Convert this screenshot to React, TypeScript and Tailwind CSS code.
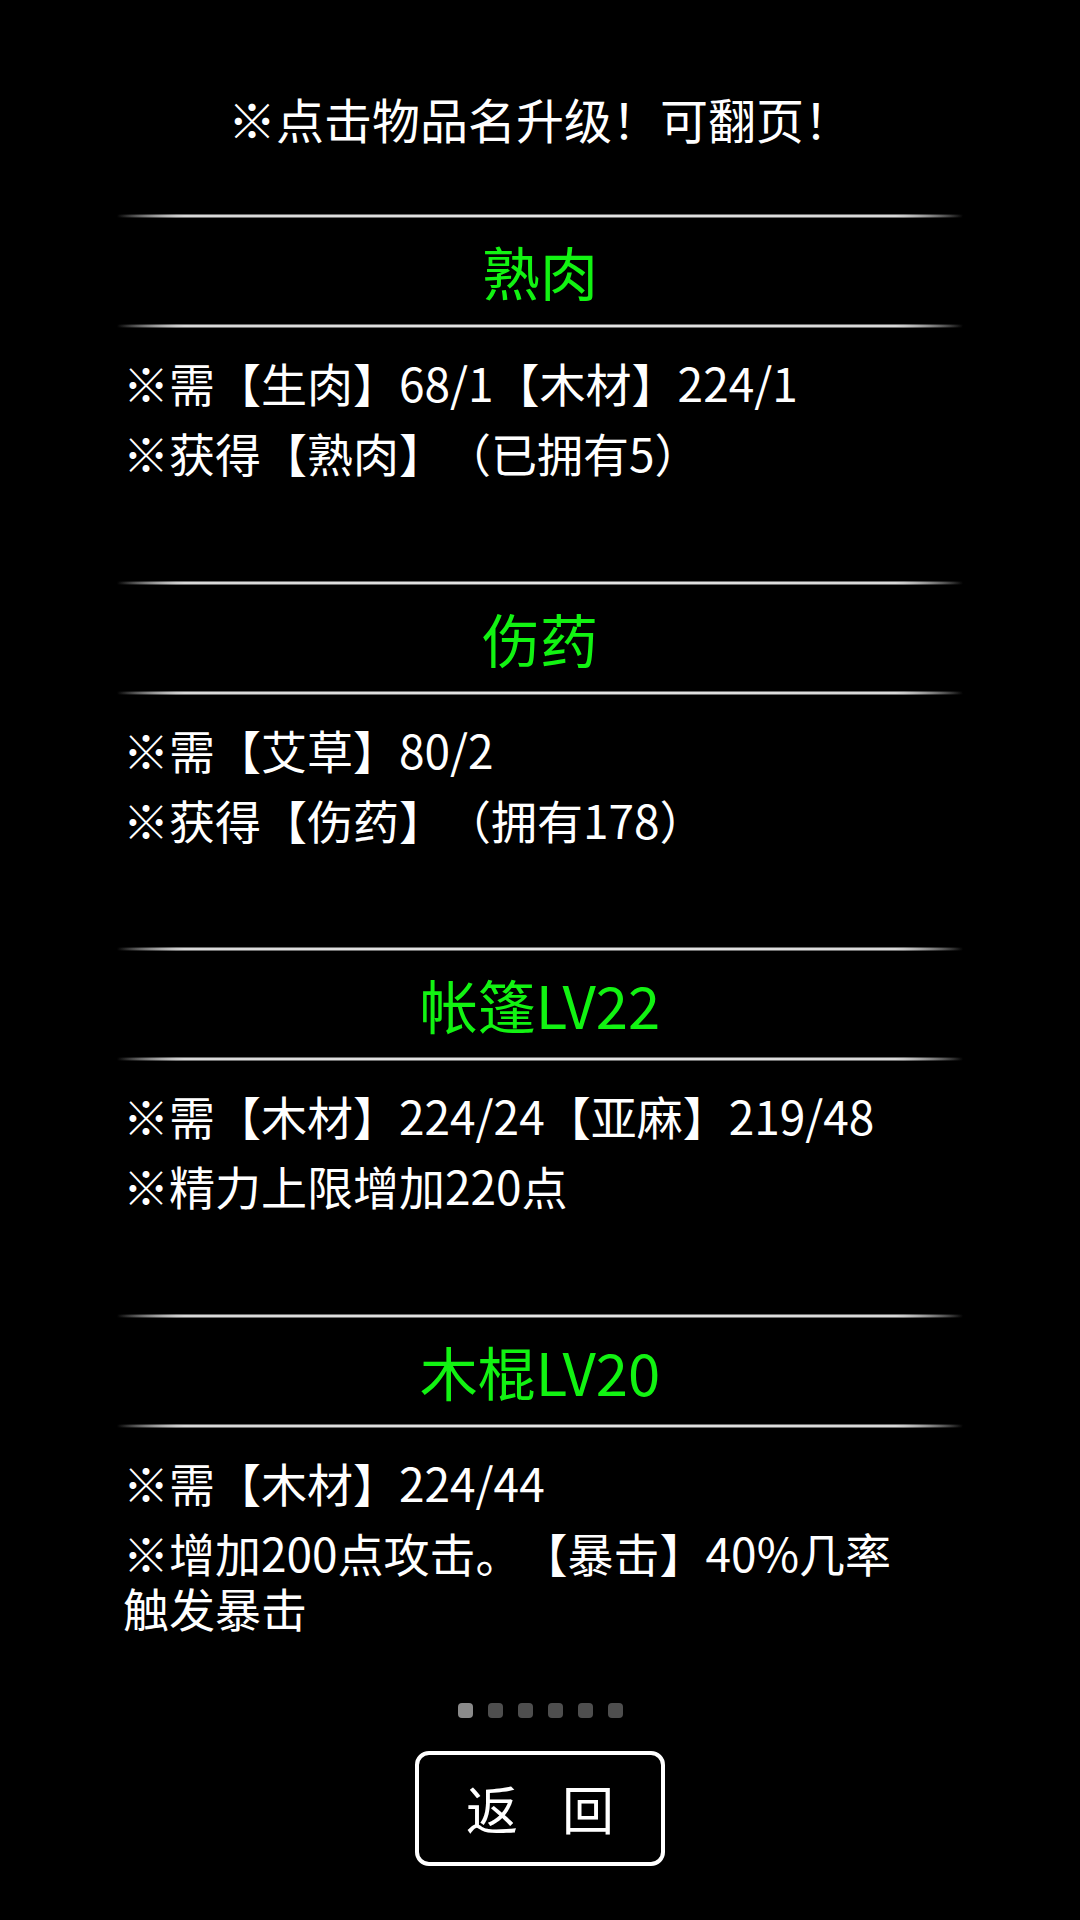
import React from "react";

type Item = {
  name: string;
  lines: string[];
};

const items: Item[] = [
  {
    name: "熟肉",
    lines: ["※需【生肉】68/1【木材】224/1", "※获得【熟肉】（已拥有5）"],
  },
  {
    name: "伤药",
    lines: ["※需【艾草】80/2", "※获得【伤药】（拥有178）"],
  },
  {
    name: "帐篷LV22",
    lines: ["※需【木材】224/24【亚麻】219/48", "※精力上限增加220点"],
  },
  {
    name: "木棍LV20",
    lines: ["※需【木材】224/44", "※增加200点攻击。【暴击】40%几率触发暴击"],
  },
];

function Divider() {
  return (
    <div className="flex h-[4px] w-full items-center bg-[linear-gradient(to_right,transparent,#6f6f6f_7%,#6f6f6f_93%,transparent)]">
      <div className="h-[2px] w-full bg-[linear-gradient(to_right,transparent,#d8d8d8_8%,#e6e6e6_50%,#d8d8d8_92%,transparent)]" />
    </div>
  );
}

export default function App() {
  const font = { fontFamily: '"Noto Sans CJK SC", "Noto Sans", sans-serif' };

  return (
    <main
      className="flex min-h-[1920px] w-[1080px] flex-col items-center bg-black text-white [text-spacing-trim:space-all]"
      style={font}
    >
      <p className="mt-[91px] text-[48px] leading-[55px] text-white">
        ※点击物品名升级！可翻页！
      </p>

      <div className="mt-[68px] flex w-[846px] flex-col">
        {items.map((item, i) => (
          <section key={item.name} className="flex flex-col">
            <Divider />
            <div className="flex h-[106px] items-center justify-center">
              <span className="text-[58px] leading-none text-[#12f312]">
                {item.name}
              </span>
            </div>
            <Divider />
            <div
              className={`flex flex-col gap-[15px] pl-[6px] pt-[27px] ${
                i < items.length - 1 ? "h-[252.5px]" : ""
              }`}
            >
              {item.lines.map((line) => (
                <p
                  key={line}
                  className="max-w-[785px] text-[46px] leading-[55px] text-white"
                >
                  {line}
                </p>
              ))}
            </div>
          </section>
        ))}
      </div>

      {/* page dots */}
      <div className="mt-[68px] flex gap-[15px]">
        {[0, 1, 2, 3, 4, 5].map((d) => (
          <span
            key={d}
            className={`h-[15px] w-[15px] rounded-[4px] ${
              d === 0 ? "bg-[#8a8a8a]" : "bg-[#4e4e4e]"
            }`}
          />
        ))}
      </div>

      <button
        type="button"
        className="mt-[33px] flex h-[115px] w-[250px] items-center justify-center gap-[44px] rounded-[14px] border-[4px] border-white bg-black text-[52px] leading-none text-white"
      >
        <span>返</span>
        <span>回</span>
      </button>
    </main>
  );
}
